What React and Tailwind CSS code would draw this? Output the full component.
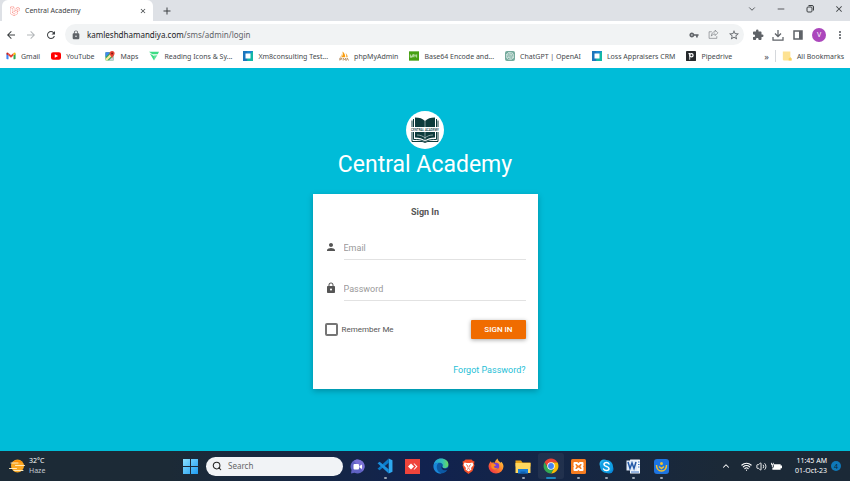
import React, { useState } from "react";
import {
  MdArrowBack,
  MdArrowForward,
  MdRefresh,
  MdLock,
  MdPerson,
  MdVpnKey,
  MdStarBorder,
  MdExtension,
  MdMoreVert,
  MdClose,
  MdAdd,
} from "react-icons/md";
import { FaLaravel } from "react-icons/fa";
import { SiOpenai } from "react-icons/si";
import { ChevronDown, ChevronUp, Minus, Search, Wifi, Volume2 } from "lucide-react";

/* ---------- bookmark icons ---------- */

const GmailIcon = () => (
  <svg viewBox="0 0 24 24" className="h-2.5 w-2.5">
    <path d="M1 20V6l5 4v10H3a2 2 0 0 1-2-2z" fill="#4285f4" />
    <path d="M18 20V10l5-4v12a2 2 0 0 1-2 2z" fill="#34a853" />
    <path d="M6 5l6 5 6-5v6l-6 5-6-5z" fill="#ea4335" />
    <path d="M1 6c0-3 3-3.500 5-1v6L1 8z" fill="#c5221f" />
    <path d="M23 6c0-3-3-3.500-5-1v6l5-3z" fill="#fbbc04" />
  </svg>
);

const YoutubeIcon = () => (
  <svg viewBox="0 0 24 24" className="h-2.5 w-2.5">
    <rect x="0" y="3" width="24" height="18" rx="5" fill="#f00" />
    <path d="M9 8l8 4-8 4z" fill="#fff" />
  </svg>
);

const MapsIcon = () => (
  <svg viewBox="0 0 24 24" className="h-2.5 w-2.5">
    <rect x="1" y="3" width="20" height="20" rx="2" fill="#34a853" />
    <path d="M1 3h12L1 15z" fill="#4285f4" />
    <path d="M9 23L21 11v12z" fill="#c8d3de" />
    <path d="M1 19L17 3l4 4L5 23H3l-2-2z" fill="#fbe9a0" />
    <path d="M17 0a6 6 0 0 1 6 6c0 4-5 7-6 12-1-5-6-8-6-12a6 6 0 0 1 6-6z" fill="#ea4335" />
    <circle cx="17" cy="6" r="2.200" fill="#7b1a12" />
  </svg>
);

const ReadingIcon = () => (
  <svg viewBox="0 0 24 24" className="h-2.5 w-2.5">
    <path d="M0 2h24l-3 6H8z" fill="#3ddc84" />
    <path d="M2 6l10 17V12z" fill="#3ddc84" />
    <path d="M20 10l-8 13V11z" fill="#5fe39b" />
  </svg>
);

const CrmIcon = () => (
  <svg viewBox="0 0 24 24" className="h-2.5 w-2.5">
    <rect width="24" height="24" fill="#1c86d1" />
    <path d="M24 0v24H0z" fill="#14b8a6" />
    <path d="M0 0h10v24H0z" fill="#1c75bc" />
    <rect x="6" y="6" width="12" height="12" fill="#fff" />
  </svg>
);

const PhpMyAdminIcon = () => (
  <svg viewBox="0 0 24 24" className="h-2.5 w-2.5">
    <path d="M8 1c5 3 7 8 7 14H6c3-4 4-9 2-14z" fill="#f89c0e" />
    <path d="M16 5c3 3 5 6 5 10h-4c0-4 0-7-1-10zM6 6c1 4-1 7-4 9h3c2-2 3-5 1-9z" fill="#f9b24a" />
    <path d="M2 23v-6h4v3H2M10 23v-6l3 4 3-4v6M18 23l2-6 3 6" fill="none" stroke="#b5895a" strokeWidth="2" />
  </svg>
);

const Base64Icon = () => (
  <svg viewBox="0 0 30 28" className="h-2.5 w-2.5">
    <rect width="30" height="28" fill="#46a012" />
    <path d="M4 9v9h4v-4H4M11 18v-8h4v8M11 14h4M18 9v5h5M23 9v10" fill="none" stroke="#e6f5dc" strokeWidth="2" />
  </svg>
);

const ChatGptIcon = () => (
  <span className="flex h-2.5 w-2.5 items-center justify-center rounded-[2px] bg-[#74aa9c] text-white">
    <SiOpenai className="h-2 w-2" />
  </span>
);

const PipedriveIcon = () => (
  <svg viewBox="0 0 24 24" className="h-2.5 w-2.5">
    <rect width="24" height="24" rx="2" fill="#26292c" />
    <circle cx="13" cy="10" r="4" fill="none" stroke="#fff" strokeWidth="3" />
    <path d="M6 5h4v16H8V8H6z" fill="#fff" />
  </svg>
);

const FolderIcon = () => (
  <svg viewBox="0 0 24 24" className="h-2.5 w-2.5">
    <path d="M2 1h18v14l3 3v5H4l-2-2z" fill="#fde293" />
    <path d="M16 23v-5l4-3 3 3v5z" fill="#f9d060" />
  </svg>
);

const bookmarks = [
  { label: "Gmail", icon: <GmailIcon /> },
  { label: "YouTube", icon: <YoutubeIcon /> },
  { label: "Maps", icon: <MapsIcon /> },
  { label: "Reading Icons & Sy...", icon: <ReadingIcon /> },
  { label: "Xm8consulting Test...", icon: <CrmIcon /> },
  { label: "phpMyAdmin", icon: <PhpMyAdminIcon /> },
  { label: "Base64 Encode and...", icon: <Base64Icon /> },
  { label: "ChatGPT | OpenAI", icon: <ChatGptIcon /> },
  { label: "Loss Appraisers CRM", icon: <CrmIcon /> },
  { label: "Pipedrive", icon: <PipedriveIcon /> },
];

/* ---------- taskbar icons ---------- */

const WindowsIcon = () => (
  <svg viewBox="0 0 30 30" className="h-[15px] w-[15px]">
    <defs>
      <linearGradient id="win" x1="0" y1="0" x2="1" y2="1">
        <stop offset="0" stopColor="#8ae0ff" />
        <stop offset="1" stopColor="#1f9bf0" />
      </linearGradient>
    </defs>
    <path d="M0 0h14v14H0zM16 0h14v14H16zM0 16h14v14H0zM16 16h14v14H16z" fill="url(#win)" />
  </svg>
);

const WeatherIcon = () => (
  <svg viewBox="0 0 32 28" className="h-3.5 w-4">
    <circle cx="17" cy="14" r="13" fill="#f9a825" />
    <path d="M7 7a13 13 0 0 1 20 0z" fill="#fb8c00" />
    <path d="M4 8h14M13 13h18M1 19h14M10 23h18" stroke="#ffe9b8" strokeWidth="2" strokeLinecap="round" />
  </svg>
);

const ChatIcon = () => (
  <svg viewBox="0 0 30 30" className="h-[15px] w-[15px]">
    <path d="M15 1a14 14 0 1 1-6 26.500L2 29l1-7A14 14 0 0 1 15 1z" fill="#6062c4" />
    <path d="M15 1a14 14 0 0 1 14 14c0 4-2 7-4 9L8 4c2-2 4-3 7-3z" fill="#7b72d6" />
    <rect x="7" y="10" width="11" height="11" rx="2" fill="#fff" />
    <path d="M19 14l5-3v9l-5-3z" fill="#fff" />
  </svg>
);

const VsCodeIcon = () => (
  <svg viewBox="0 0 30 30" className="h-4 w-4">
    <path d="M22 1l7 3v22l-7 3z" fill="#2ea8f0" />
    <path d="M22 1v8L5 23l-4-3z" fill="#0a7bc9" />
    <path d="M22 29v-8L5 7l-4 3z" fill="#1a8fdd" />
  </svg>
);

const AnyDeskIcon = () => (
  <svg viewBox="0 0 30 30" className="h-[15px] w-[15px]">
    <rect width="30" height="30" fill="#ef443b" />
    <path d="M12 9l6 6-6 6-6-6z" fill="#fff" />
    <path d="M17 9h2l6 6-6 6h-2l5-6z" fill="#fff" />
  </svg>
);

const EdgeIcon = () => (
  <svg viewBox="0 0 30 30" className="h-4 w-4">
    <defs>
      <linearGradient id="edge" x1="0" y1="0" x2="1" y2="0">
        <stop offset="0" stopColor="#1e9de0" />
        <stop offset="0.6" stopColor="#35c1b5" />
        <stop offset="1" stopColor="#6bdc5b" />
      </linearGradient>
    </defs>
    <circle cx="15" cy="15" r="14" fill="#0c59a4" />
    <path d="M1 14C2 6 8 1 15 1c8 0 14 5 14 11 0 5-4 7-7 7-4 0-5-1-4-3 2-4-2-7-6-7-5 0-9 2-11 5z" fill="url(#edge)" />
    <path d="M1 14c2-4 6-5 10-5-3 2-4 5-4 8 0 6 4 11 9 12C7 30 0 23 1 14z" fill="#1a86d8" />
    <path d="M17 12c-2 3 0 7 6 8 2 0 4-1 6-2l1 4-7 1c-6 0-9-5-6-11z" fill="#12285a" />
  </svg>
);

const BraveIcon = () => (
  <svg viewBox="0 0 30 30" className="h-[15px] w-[15px]">
    <path d="M9 1h12l3 3 3 1-1 5 1 3-4 11-8 6-8-6L3 13l1-3-1-5 3-1z" fill="#f4502a" />
    <path d="M7 7l5 1h6l5-1 2 5-5 6 1 3-6 4-6-4 1-3-5-6z" fill="#fff" />
    <path d="M10 11l3 2 1 4M20 11l-3 2-1 4M12 21l3-2 3 2" fill="none" stroke="#f4502a" strokeWidth="1.500" />
  </svg>
);

const FirefoxIcon = () => (
  <svg viewBox="0 0 30 30" className="h-4 w-4">
    <defs>
      <linearGradient id="fox" x1="1" y1="0" x2="0" y2="1">
        <stop offset="0" stopColor="#ffde3f" />
        <stop offset="0.5" stopColor="#ff7a2b" />
        <stop offset="1" stopColor="#e8214f" />
      </linearGradient>
    </defs>
    <path d="M5 6l2 3c2-1 4-1 6 0 0-3 2-6 5-8 0 4 4 6 6 8l1-2c3 3 4 6 4 9a14 13 0 0 1-28 0C1 12 3 9 5 6z" fill="url(#fox)" />
    <circle cx="15" cy="15" r="6" fill="#7a3fd0" />
    <path d="M6 12c3-2 6-1 9 1-1 2-3 2-4 3 1 3 5 4 8 2-2 5-11 5-13-1z" fill="#ff8a1f" />
  </svg>
);

const ExplorerIcon = () => (
  <svg viewBox="0 0 32 30" className="h-[15px] w-4">
    <path d="M1 3h11l3 4h16v8H1z" fill="#e8a317" />
    <path d="M1 8h30v20H1z" fill="#ffd75e" />
    <path d="M6 20h20v9H6z" fill="#1c7fd6" />
    <path d="M11 25h10v4H11z" fill="#0f5fae" />
  </svg>
);

const ChromeIcon = () => (
  <svg viewBox="0 0 30 30" className="h-4 w-4">
    <path d="M15 8h12.100a14 14 0 0 1-12.100 21l6-10.500z" fill="#fbbc04" />
    <path d="M2.900 8A14 14 0 0 1 27.100 8H15l-6 10z" fill="#ea4335" />
    <path d="M2.900 8L9 18.500l6 3.500 5-1-5 8A14 14 0 0 1 2.900 8z" fill="#34a853" />
    <circle cx="15" cy="15" r="7" fill="#fff" />
    <circle cx="15" cy="15" r="5.500" fill="#4285f4" />
  </svg>
);

const XamppIcon = () => (
  <svg viewBox="0 0 30 30" className="h-[15px] w-[15px]">
    <rect width="30" height="30" rx="3" fill="#f57c20" />
    <path
      d="M7 8h5l3 3 3-3h5v5l-2 2 2 2v5h-5l-3-3-3 3H7v-5l2-2-2-2z"
      fill="none"
      stroke="#fff"
      strokeWidth="4"
      strokeLinejoin="round"
    />
  </svg>
);

const SkypeIcon = () => (
  <svg viewBox="0 0 30 30" className="h-[15px] w-[15px]">
    <circle cx="10" cy="10" r="9" fill="#29b6f0" />
    <circle cx="20" cy="20" r="9" fill="#0a86d8" />
    <circle cx="15" cy="15" r="13" fill="#109fe4" />
    <path d="M20 10c-1-2-3-3-5-3-3 0-5 1-5 4 0 5 10 3 10 8 0 2-2 4-5 4s-5-1-6-3" fill="none" stroke="#fff" strokeWidth="3" strokeLinecap="round" />
  </svg>
);

const WordIcon = () => (
  <svg viewBox="0 0 30 30" className="h-[15px] w-[15px]">
    <rect x="8" y="1" width="20" height="28" rx="1" fill="#f2f6fb" />
    <path d="M24 6h3M24 11h3M24 16h3M10 26h16" stroke="#3b73c4" strokeWidth="2" />
    <path d="M1 3h21v20H1z" fill="#dfe9f7" />
    <path d="M4 6l4 13 4-11 4 11 4-13" fill="none" stroke="#2358a6" strokeWidth="3" />
  </svg>
);

const SupportIcon = () => (
  <svg viewBox="0 0 30 30" className="h-[15px] w-[15px]">
    <rect width="30" height="30" rx="6" fill="#1d74e0" />
    <circle cx="15" cy="9" r="3" fill="#f2c230" />
    <path d="M5 12c0 7 4 12 10 12s10-5 10-12M10 15l5 4 5-4" fill="none" stroke="#f2c230" strokeWidth="3" />
  </svg>
);

const apps = [
  { name: "Chat", icon: <ChatIcon /> },
  { name: "Visual Studio Code", icon: <VsCodeIcon />, running: true },
  { name: "AnyDesk", icon: <AnyDeskIcon /> },
  { name: "Edge", icon: <EdgeIcon /> },
  { name: "Brave", icon: <BraveIcon /> },
  { name: "Firefox", icon: <FirefoxIcon /> },
  { name: "File Explorer", icon: <ExplorerIcon />, running: true },
  { name: "Chrome", icon: <ChromeIcon />, active: true },
  { name: "XAMPP", icon: <XamppIcon />, running: true },
  { name: "Skype", icon: <SkypeIcon />, running: true },
  { name: "Word", icon: <WordIcon />, running: true },
  { name: "Support", icon: <SupportIcon />, running: true },
];

/* ---------- browser chrome ---------- */

const TabStrip = () => (
  <div className="flex h-[21px] items-center bg-[#dee1e6] text-[#3c4043]">
    <div className="ml-0.5 flex h-full w-[151px] items-center rounded-t-md bg-white pl-2 pr-1.5">
      <FaLaravel className="h-2.5 w-2.5 text-[#f9766c]" />
      <span className="ml-[5px] flex-1 text-[7px] leading-none">Central Academy</span>
      <button aria-label="Close tab"><MdClose className="h-2 w-2" /></button>
    </div>
    <button className="ml-2" aria-label="New tab"><MdAdd className="h-3 w-3" /></button>
    <div className="ml-auto flex items-center gap-[19px] pb-1 pr-1.5">
      <button aria-label="Search tabs"><ChevronDown className="h-2.5 w-2.5" /></button>
      <button aria-label="Minimize"><Minus className="h-2.5 w-2.5" /></button>
      <button aria-label="Restore">
        <svg viewBox="0 0 20 20" className="h-2.5 w-2.5" fill="none" stroke="currentColor" strokeWidth="2">
          <rect x="4" y="6" width="10" height="10" rx="2" />
          <path d="M7 3h7a3 3 0 0 1 3 3v7" />
        </svg>
      </button>
      <button aria-label="Close"><MdClose className="h-2.5 w-2.5" /></button>
    </div>
  </div>
);

const Toolbar = () => (
  <div className="flex h-[27px] items-center bg-white pl-[5px] pr-1 text-[#5f6368]">
    <button aria-label="Back"><MdArrowBack className="h-3 w-3 text-[#3c4043]" /></button>
    <button className="ml-2" aria-label="Forward"><MdArrowForward className="h-3 w-3 text-[#b4b7ba]" /></button>
    <button className="ml-2" aria-label="Reload"><MdRefresh className="h-3 w-3 text-[#3c4043]" /></button>
    <div className="ml-2 flex h-[21px] flex-1 items-center rounded-full bg-[#f1f3f4] pl-1.5 pr-1">
      <MdLock className="h-2.5 w-2.5" />
      <span className="ml-1.5 flex-1 text-[8px] leading-none">
        <span className="text-[#202124]">kamleshdhamandiya.com</span>/sms/admin/login
      </span>
      <div className="flex items-center gap-[9px]">
        <MdVpnKey className="h-2.5 w-2.5" />
        <svg viewBox="0 0 20 20" className="h-[11px] w-[11px]" fill="none" stroke="currentColor" strokeWidth="1">
          <path d="M7 5H2v12h14v-4" />
          <path d="M13 2l5 5-5 5V9c-3 0-5 1-7 4 0-5 3-8 7-8z" />
        </svg>
        <MdStarBorder className="h-3 w-3" />
      </div>
    </div>
    <div className="ml-2 flex items-center gap-2">
      <MdExtension className="h-3 w-3" />
      <svg viewBox="0 0 24 24" className="h-3 w-3" fill="none" stroke="currentColor" strokeWidth="2.500">
        <path d="M12 2v13M6 9l6 6 6-6M2 16v6h20v-6" />
      </svg>
      <svg viewBox="0 0 24 24" className="h-3 w-3" fill="none" stroke="currentColor" strokeWidth="3">
        <path d="M4 4h16v16H4z" />
        <path d="M17 4v16" strokeWidth="6" />
      </svg>
      <span className="flex h-3.5 w-3.5 items-center justify-center rounded-full bg-[#ab47bc] text-[7px] leading-none text-white">V</span>
      <MdMoreVert className="h-3 w-3" />
    </div>
  </div>
);

const BookmarkBar = () => (
  <nav className="flex h-5 items-center whitespace-nowrap bg-white pb-1 pl-1.5 pr-1.5 text-[7px] leading-none text-[#45494d]">
    <div className="flex gap-[11px]">
      {bookmarks.map((b) => (
        <a key={b.label} href="#" className="flex items-center gap-[5px]">
          {b.icon}
          {b.label}
        </a>
      ))}
    </div>
    <div className="ml-auto flex items-center">
      <span className="text-[9px]">»</span>
      <span className="mx-1.5 h-3 w-px bg-[#d5d8dc]" />
      <a href="#" className="flex items-center gap-[5px]">
        <FolderIcon />
        All Bookmarks
      </a>
    </div>
  </nav>
);

/* ---------- login page ---------- */

const AcademyLogo = () => (
  <svg viewBox="0 0 76 76" className="h-[38px] w-[38px]">
    <circle cx="38" cy="38" r="38" fill="#fff" />
    <path d="M18 13c9 0 15 2 20 7 5-5 11-7 20-7v40c-9 0-15 2-20 6-5-4-11-6-20-6z" fill="#0d3b3c" />
    <path d="M15 16v41c9 0 17 0 23 5 6-5 14-5 23-5V16" fill="none" stroke="#0d3b3c" strokeWidth="2" />
    <path d="M12 19v42h20c3 0 4 2 6 2s3-2 6-2h20V19" fill="none" stroke="#0d3b3c" strokeWidth="2" />
    <path d="M38 20v39M22 48c6 0 12 2 16 6 4-4 10-6 16-6" fill="none" stroke="#fff" strokeWidth="1" />
    <rect x="8" y="32" width="60" height="10" fill="#fff" />
    <text x="38" y="39" textAnchor="middle" fontSize="6" fontWeight="500" fill="#0d3b3c">
      CENTRAL ACADEMY
    </text>
  </svg>
);

const Field = ({ id, label, type, icon: Icon }) => (
  <div className="flex items-center gap-[7px]">
    <label htmlFor={id} aria-label={label} className="pb-0.5">
      <Icon className="h-3 w-3 text-[#555]" />
    </label>
    <input
      id={id}
      type={type}
      placeholder={label}
      className="h-6 min-w-0 flex-1 border-b border-[#e2e2e2] text-[9px] text-[#555] placeholder:text-[#999] focus:border-[#00bcd4] focus:outline-none"
    />
  </div>
);

const LoginPage = () => {
  const [remember, setRemember] = useState(false);

  return (
    <main className="flex flex-1 flex-col items-center bg-[#00bcd8] pb-8 pt-[43px] font-[Roboto,sans-serif]">
      <AcademyLogo />
      <h1 className="text-[23px] leading-8 text-white">Central Academy</h1>
      <form
        onSubmit={(e) => e.preventDefault()}
        className="mt-[13px] w-full max-w-[225px] bg-white px-3 py-3 shadow-[0_2px_6px_rgba(0,0,0,0.25)]"
      >
        <h2 className="text-center text-[9px] font-bold leading-3 text-[#555]">Sign In</h2>
        <div className="mt-[18px] flex flex-col gap-[17px]">
          <Field id="email" label="Email" type="email" icon={MdPerson} />
          <Field id="password" label="Password" type="password" icon={MdLock} />
        </div>
        <div className="mt-[19px] flex items-center justify-between">
          <label className="flex items-center gap-1 text-[8px] text-[#555]">
            <input
              type="checkbox"
              checked={remember}
              onChange={(e) => setRemember(e.target.checked)}
              className="h-[13px] w-[13px] appearance-none rounded-[2px] border-2 border-[#757575] bg-white checked:bg-[#00bcd4]"
            />
            Remember Me
          </label>
          <button type="submit" className="h-[19px] rounded-[1px] bg-[#f06c00] px-[13px] text-[8px] font-medium text-white shadow-[0_1px_4px_rgba(0,0,0,0.35)]">
            SIGN IN
          </button>
        </div>
        <div className="mt-6 text-right text-[9px] leading-[14px]">
          <a href="#" className="text-[#1fc0d6]">Forgot Password?</a>
        </div>
      </form>
    </main>
  );
};

/* ---------- taskbar ---------- */

const AppButton = ({ app }) => (
  <button
    aria-label={app.name}
    className={`relative mx-px flex h-[26px] items-center justify-center rounded-[3px] ${app.active ? "bg-white/5" : ""}`}
  >
    {app.icon}
    {app.running && <span className="absolute bottom-0 h-0.5 w-[3px] rounded-full bg-[#9ba6b5]" />}
    {app.active && <span className="absolute bottom-0 h-0.5 w-2.5 rounded-full bg-[#1b86c0]" />}
  </button>
);

const Taskbar = () => (
  <footer className="grid h-[30px] grid-cols-[1fr_auto_1fr] items-center bg-gradient-to-r from-[#1c2a36] from-20% via-[#11224f] via-50% to-[#1b2937] to-85% text-[7px] text-white">
    <div className="flex items-center gap-1 pl-[9px]">
      <WeatherIcon />
      <div className="leading-[10px]">
        <div>32°C</div>
        <div className="text-[#c3cad2]">Haze</div>
      </div>
    </div>
    <div className="flex items-center pl-2">
      <button aria-label="Start"><WindowsIcon /></button>
      <label className="ml-2 flex h-[19px] w-[137px] items-center gap-1.5 rounded-full bg-[#f1f3f6] pl-1.5">
        <Search className="h-2.5 w-2.5 text-[#222]" strokeWidth={2.5} />
        <input
          aria-label="Search"
          placeholder="Search"
          className="min-w-0 flex-1 bg-transparent text-[8px] text-[#333] placeholder:text-[#666] focus:outline-none"
        />
      </label>
      <div className="ml-px grid w-[331px] grid-cols-12">
        {apps.map((app) => (
          <AppButton key={app.name} app={app} />
        ))}
      </div>
    </div>
    <div className="flex items-center justify-end pr-[9px]">
      <ChevronUp className="h-2.5 w-2.5" strokeWidth={2.5} />
      <div className="ml-2.5 flex items-center gap-1">
        <Wifi className="h-[11px] w-[11px]" strokeWidth={2.5} />
        <Volume2 className="h-[11px] w-[11px]" />
        <svg viewBox="0 0 24 24" className="h-[11px] w-[11px]">
          <path d="M6 7h15v12H3v-5h3zM21 10h3v6h-3z" fill="#fff" />
          <path d="M1 4v4h4V4M3 8v5" fill="none" stroke="#fff" strokeWidth="2" />
        </svg>
      </div>
      <div className="ml-[13px] text-right leading-[10px]">
        <div>11:45 AM</div>
        <div>01-Oct-23</div>
      </div>
      <span className="ml-1 flex h-2.5 w-2.5 items-center justify-center rounded-full bg-[#0f78b8] leading-none text-[#0c2638]">4</span>
    </div>
  </footer>
);

export default function App() {
  return (
    <div className="flex min-h-screen flex-col font-['Noto_Sans',sans-serif]">
      <header>
        <TabStrip />
        <Toolbar />
        <BookmarkBar />
      </header>
      <LoginPage />
      <Taskbar />
    </div>
  );
}
